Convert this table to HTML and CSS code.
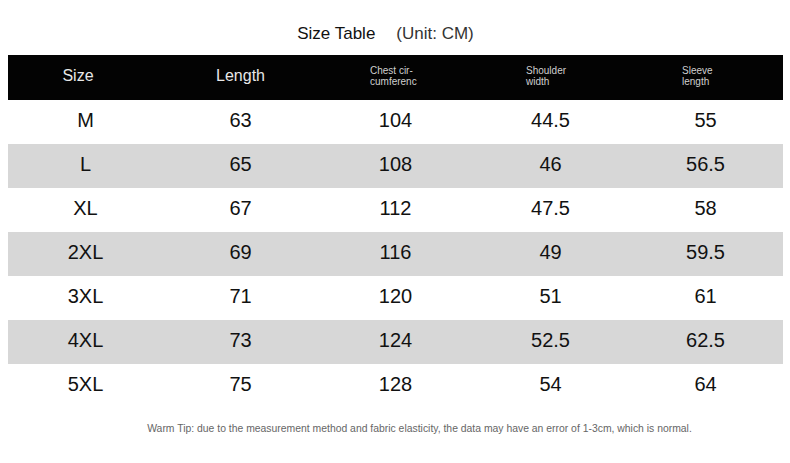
FILE: index.html
```html
<!DOCTYPE html>
<html>
<head>
<meta charset="utf-8">
<link rel="stylesheet" href="styles.css">
</head>
<body>
<div class="page">
  <div class="title"><span class="t-main">Size Table</span><span class="t-unit">(Unit: CM)</span></div>
  <div class="table">
    <div class="row head">
      <div class="cell"><span class="h-big h-size">Size</span></div>
      <div class="cell"><span class="h-big">Length</span></div>
      <div class="cell"><span class="h-small h-chest">Chest cir-<br>cumferenc</span></div>
      <div class="cell"><span class="h-small h-shoulder">Shoulder<br>width</span></div>
      <div class="cell"><span class="h-small h-sleeve">Sleeve<br>length</span></div>
    </div>
    <div class="row"><div class="cell">M</div><div class="cell">63</div><div class="cell">104</div><div class="cell">44.5</div><div class="cell">55</div></div>
    <div class="row alt"><div class="cell">L</div><div class="cell">65</div><div class="cell">108</div><div class="cell">46</div><div class="cell">56.5</div></div>
    <div class="row"><div class="cell">XL</div><div class="cell">67</div><div class="cell">112</div><div class="cell">47.5</div><div class="cell">58</div></div>
    <div class="row alt"><div class="cell">2XL</div><div class="cell">69</div><div class="cell">116</div><div class="cell">49</div><div class="cell">59.5</div></div>
    <div class="row"><div class="cell">3XL</div><div class="cell">71</div><div class="cell">120</div><div class="cell">51</div><div class="cell">61</div></div>
    <div class="row alt"><div class="cell">4XL</div><div class="cell">73</div><div class="cell">124</div><div class="cell">52.5</div><div class="cell">62.5</div></div>
    <div class="row"><div class="cell">5XL</div><div class="cell">75</div><div class="cell">128</div><div class="cell">54</div><div class="cell">64</div></div>
  </div>
  <div class="tip">Warm Tip: due to the measurement method and fabric elasticity, the data may have an error of 1-3cm, which is normal.</div>
</div>
</body>
</html>
```
FILE: styles.css
```css
html, body {
  margin: 0;
  padding: 0;
  background: #fff;
}
body {
  font-family: "Liberation Sans", Arial, sans-serif;
  color: #111;
}
.page {
  width: 790px;
  height: 463px;
  padding: 0 7px 0 8px;
  box-sizing: border-box;
}
.title {
  height: 55px;
  display: flex;
  justify-content: center;
  align-items: center;
  padding-right: 20px;
  padding-top: 12px;
  box-sizing: border-box;
  font-size: 17px;
  gap: 21px;
}
.t-main { color: #111; }
.t-unit { color: #333; }
.table {
  width: 775px;
}
.row {
  display: grid;
  grid-template-columns: repeat(5, 155px);
  height: 44px;
  align-items: center;
}
.row.alt {
  background: #d7d7d7;
}
.row.head {
  background: #030303;
  height: 45px;
}
.cell {
  text-align: center;
  font-size: 20px;
  line-height: 40px;
  padding-bottom: 4px;
  color: #111;
}
.row.head .cell {
  color: #e8e8e8;
  display: flex;
  justify-content: center;
  align-items: center;
  height: 45px;
  padding-bottom: 0;
  line-height: normal;
}
.h-big {
  font-size: 16px;
  line-height: 18px;
  margin-bottom: 3px;
}
.h-size {
  margin-right: 15px;
}
.h-small {
  font-size: 10px;
  line-height: 11px;
  width: 51px;
  text-align: left;
  margin-bottom: 4px;
  color: #cfcfcf;
  white-space: nowrap;
}
.h-shoulder { margin-left: 2px; }
.h-sleeve { margin-left: 4px; }
.tip {
  text-align: center;
  font-size: 10.4px;
  color: #666;
  margin-top: 15px;
  padding-left: 48px;
}
```
